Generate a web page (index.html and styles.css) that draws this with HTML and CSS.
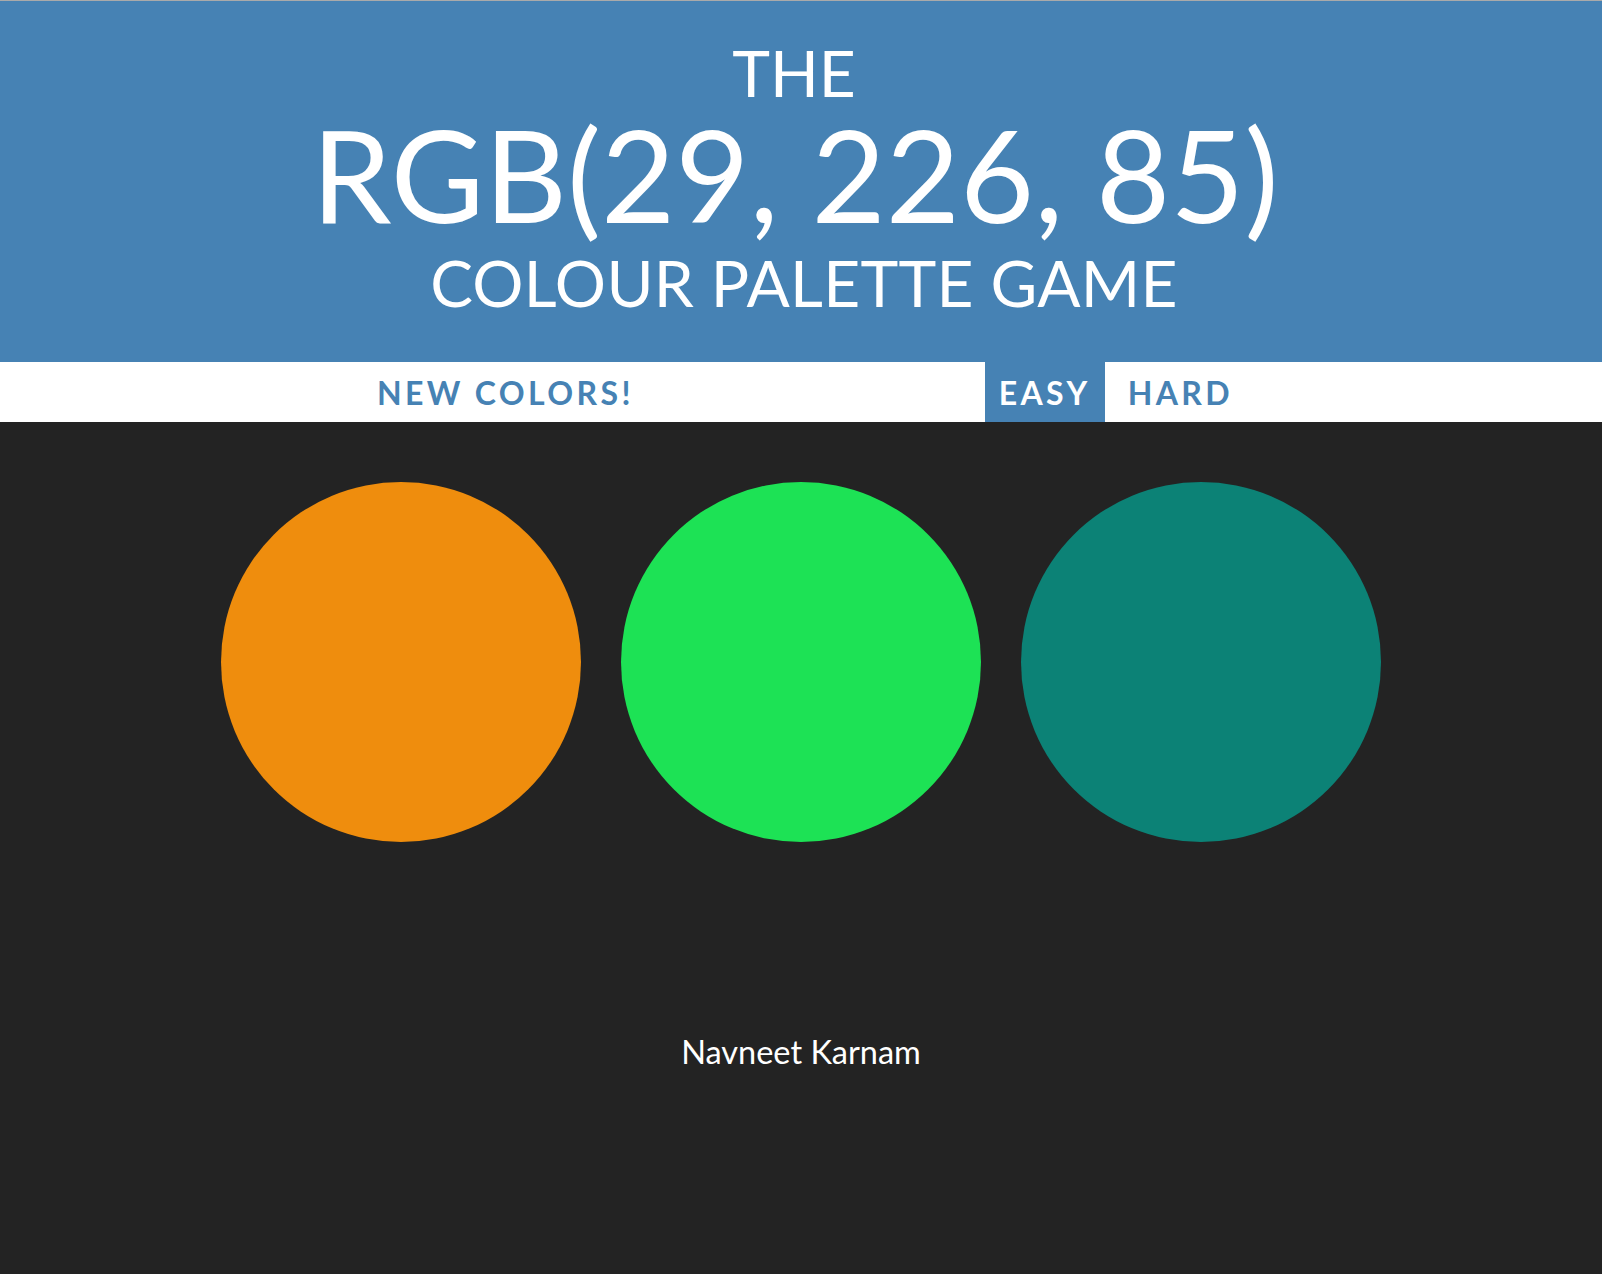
FILE: index.html
```html
<!DOCTYPE html>
<html lang="en">
<head>
<meta charset="utf-8">
<title>Colour Palette Game</title>
<link rel="stylesheet" href="styles.css">
</head>
<body>
<header class="title">
  <h1 class="title-text">
    <span class="title-small">THE</span>
    <span class="title-big">RGB(29, 226, 85)</span>
    <span class="title-sub">COLOUR PALETTE GAME</span>
  </h1>
</header>
<nav class="stripe">
  <button class="btn btn-reset">New Colors!</button>
  <span class="message"></span>
  <button class="btn btn-mode">Easy</button>
  <button class="btn btn-mode is-selected">Hard</button>
</nav>
<main class="board">
  <div class="swatch" style="background: rgb(239, 141, 13);"></div>
  <div class="swatch" style="background: rgb(29, 226, 85);"></div>
  <div class="swatch" style="background: rgb(12, 130, 118);"></div>
</main>
<footer class="credit">Navneet Karnam</footer>
</body>
</html>
```

FILE: styles.css
```css
html, body {
  margin: 0;
  padding: 0;
}

body {
  background: #232323;
  font-family: "Lato", "Noto Sans", sans-serif;
  border-top: 1px solid #aaaaaa;
  min-height: 1273px;
}

.title {
  background: #4682b4;
  color: #ffffff;
  text-align: center;
  padding: 37px 0 37px;
}

.title-text {
  margin: 0;
  font-weight: 400;
}

.title-small,
.title-big,
.title-sub {
  display: block;
}

.title-small {
  font-size: 64px;
  line-height: 70px;
  padding-right: 14px;
}

.title-big {
  font-size: 128px;
  line-height: 132px;
  padding-right: 12px;
}

.title-sub {
  font-size: 64px;
  line-height: 85px;
  letter-spacing: 0.3px;
  padding-left: 6px;
}

.stripe {
  background: #ffffff;
  height: 60px;
  display: flex;
  justify-content: center;
  align-items: stretch;
  gap: 9px;
  padding-left: 8px;
}

.btn {
  border: none;
  background: none;
  margin: 0;
  padding: 0 14px;
  height: 100%;
  font-family: "Lato", "Noto Sans", sans-serif;
  font-weight: 700;
  font-size: 32px;
  letter-spacing: 3.4px;
  text-transform: uppercase;
  color: #4682b4;
  cursor: pointer;
}

.message {
  width: 20%;
}

.btn-mode {
  background: #4682b4;
  color: #ffffff;
}

.btn-mode.is-selected {
  background: #ffffff;
  color: #4682b4;
}

.board {
  display: flex;
  justify-content: center;
  gap: 40px;
  margin-top: 60px;
}

.swatch {
  width: 360px;
  height: 360px;
  border-radius: 50%;
}

.credit {
  margin-top: 192px;
  text-align: center;
  color: #ffffff;
  font-size: 32.5px;
  line-height: 36px;
}
```
